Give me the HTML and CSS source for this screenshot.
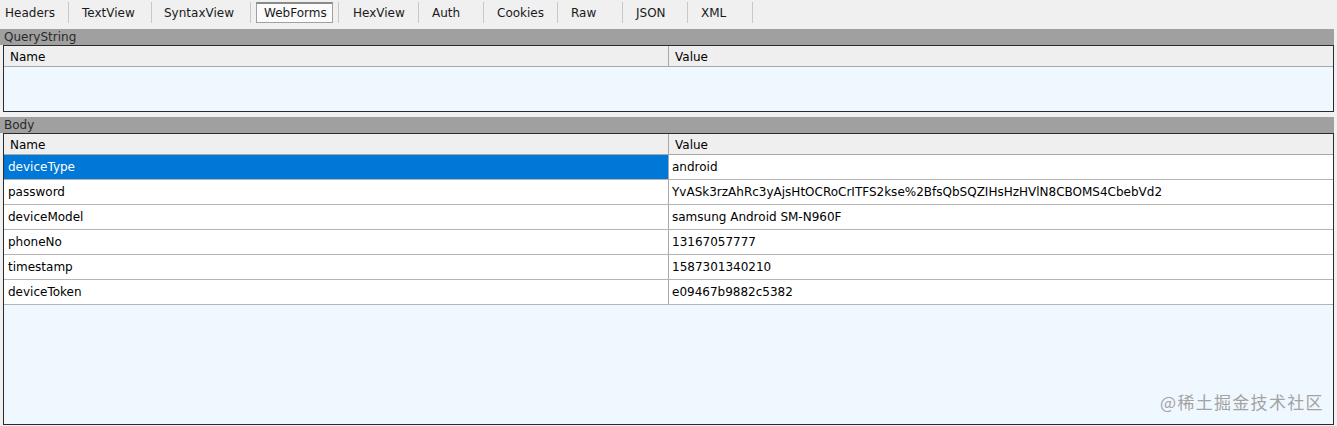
FILE: index.html
```html
<!DOCTYPE html>
<html>
<head>
<meta charset="utf-8">
<link rel="stylesheet" href="styles.css">
</head>
<body>
<div class="tabs">
  <div class="tab first">Headers</div>
  <div class="tab w-textview">TextView</div>
  <div class="tab w-syntax">SyntaxView</div>
  <div class="tab active w-webforms"><span>WebForms</span></div>
  <div class="tab w-hex">HexView</div>
  <div class="tab">Auth</div>
  <div class="tab w-cookies">Cookies</div>
  <div class="tab">Raw</div>
  <div class="tab">JSON</div>
  <div class="tab">XML</div>
</div>

<div class="section">
  <div class="bar">QueryString</div>
  <div class="grid grid-qs">
    <div class="row head"><div class="c name">Name</div><div class="c value">Value</div></div>
    <div class="empty"></div>
  </div>
</div>

<div class="section body-section">
  <div class="bar">Body</div>
  <div class="grid grid-body">
    <div class="row head"><div class="c name">Name</div><div class="c value">Value</div></div>
    <div class="row item selected"><div class="c name">deviceType</div><div class="c value">android</div></div>
    <div class="row item"><div class="c name">password</div><div class="c value">YvASk3rzAhRc3yAjsHtOCRoCrITFS2kse%2BfsQbSQZIHsHzHVlN8CBOMS4CbebVd2</div></div>
    <div class="row item"><div class="c name">deviceModel</div><div class="c value">samsung Android SM-N960F</div></div>
    <div class="row item"><div class="c name">phoneNo</div><div class="c value">13167057777</div></div>
    <div class="row item"><div class="c name">timestamp</div><div class="c value">1587301340210</div></div>
    <div class="row item"><div class="c name">deviceToken</div><div class="c value">e09467b9882c5382</div></div>
    <div class="empty"></div>
  </div>
</div>

<div class="watermark">@稀土掘金技术社区</div>
</body>
</html>
```

FILE: styles.css
```css
html, body {
  margin: 0;
  padding: 0;
}
body {
  width: 1337px;
  height: 426px;
  overflow: hidden;
  background: #f0f0f0;
  font-family: "DejaVu Sans", "Liberation Sans", sans-serif;
  font-size: 12px;
  color: #000;
  position: relative;
}

.tabs {
  display: flex;
  height: 27px;
  margin-bottom: 2px;
  align-items: stretch;
}
.tab {
  box-sizing: border-box;
  width: 65px;
  padding: 0 0 0 13px;
  border-right: 1px solid #c8c8c8;
  margin: 2px 0 4px;
  display: flex;
  align-items: center;
  color: #1a1a1a;
  white-space: nowrap;
}
.tab.first {
  padding-left: 5px;
  width: 69px;
}
.tab.w-textview { width: 83px; }
.tab.w-syntax { width: 99px; padding-left: 12px; }
.tab.w-webforms { width: 88px; }
.tab.w-hex { width: 80px; padding-left: 14px; }
.tab.w-cookies { width: 74px; }
.tab.active {
  padding: 0 5px 0 5px;
}
.tab.active span {
  display: flex;
  align-items: center;
  height: 100%;
  flex: 1;
  padding: 0 0 0 7px;
  border: 1px solid #a0a0a0;
  border-top: 2px solid #8a8a8a;
  background: #fbfbfb;
  box-sizing: border-box;
}

.section {
  padding-right: 3px;
}
.body-section {
  margin-top: 5px;
}
.bar {
  height: 16px;
  line-height: 16px;
  background: #a0a0a0;
  padding-left: 4px;
  color: #2a2a2a;
}
.grid {
  margin-left: 3px;
  border: 1px solid #2b2b2b;
  background: #f0f8ff;
  display: flex;
  flex-direction: column;
}
.grid-qs {
  height: 65px;
}
.grid-body {
  height: 290px;
}
.row {
  display: flex;
  flex: none;
  box-sizing: border-box;
}
.c {
  box-sizing: border-box;
  white-space: nowrap;
  overflow: hidden;
}
.c.name {
  width: 665px;
  border-right: 1px solid #a8a8a8;
}
.c.value {
  flex: 1;
}
.head {
  height: 21px;
  background: #efefef;
  border-bottom: 1px solid #a8a8a8;
}
.head .c {
  line-height: 20px;
  padding-left: 6px;
  padding-top: 1px;
}
.item {
  height: 25px;
  background: #fff;
  border-bottom: 1px solid #b4b4b4;
}
.item .c {
  line-height: 24px;
}
.item .c.name {
  padding-left: 4px;
}
.item .c.value {
  padding-left: 3px;
}
.item.selected .c.name {
  background: #0078d7;
  color: #fff;
}
.empty {
  flex: 1;
}

.watermark {
  position: absolute;
  left: 1160px;
  top: 389px;
  font-family: "Noto Sans CJK SC", sans-serif;
  font-size: 17px;
  color: #a3a3a3;
  letter-spacing: 1.3px;
}
```
